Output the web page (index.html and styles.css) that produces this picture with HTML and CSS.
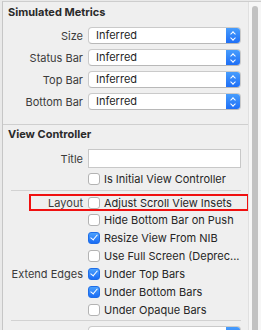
FILE: index.html
```html
<!DOCTYPE html>
<html lang="en">
<head>
    <meta charset="UTF-8">
    <meta name="viewport" content="width=device-width, initial-scale=1.0">
    <title>Attributes Inspector</title>
    <link rel="stylesheet" href="styles.css">
</head>
<body>
    <div class="panel">
        <div class="content">
            <div class="section metrics">
                <h2>Simulated Metrics</h2>
                <div class="fields">
                    <div class="row">
                        <label>Size</label>
                        <div class="select"><span>Inferred</span><i class="arrows"></i></div>
                    </div>
                    <div class="row">
                        <label>Status Bar</label>
                        <div class="select"><span>Inferred</span><i class="arrows"></i></div>
                    </div>
                    <div class="row">
                        <label>Top Bar</label>
                        <div class="select"><span>Inferred</span><i class="arrows"></i></div>
                    </div>
                    <div class="row">
                        <label>Bottom Bar</label>
                        <div class="select"><span>Inferred</span><i class="arrows"></i></div>
                    </div>
                </div>
            </div>

            <div class="section controller">
                <h2>View Controller</h2>
                <div class="row title-row">
                    <label>Title</label>
                    <div class="textfield"></div>
                </div>
                <div class="row check-row">
                    <label></label>
                    <div class="check"><span class="box"></span>Is Initial View Controller</div>
                </div>
                <hr class="divider">
                <div class="highlight">
                    <div class="row check-row">
                        <label>Layout</label>
                        <div class="check"><span class="box"></span>Adjust Scroll View Insets</div>
                    </div>
                </div>
                <div class="row check-row">
                    <label></label>
                    <div class="check"><span class="box"></span>Hide Bottom Bar on Push</div>
                </div>
                <div class="row check-row">
                    <label></label>
                    <div class="check"><span class="box on"></span>Resize View From NIB</div>
                </div>
                <div class="row check-row">
                    <label></label>
                    <div class="check"><span class="box"></span>Use Full Screen (Deprec...</div>
                </div>
                <div class="row check-row">
                    <label>Extend Edges</label>
                    <div class="check"><span class="box on"></span>Under Top Bars</div>
                </div>
                <div class="row check-row">
                    <label></label>
                    <div class="check"><span class="box on"></span>Under Bottom Bars</div>
                </div>
                <div class="row check-row">
                    <label></label>
                    <div class="check"><span class="box"></span>Under Opaque Bars</div>
                </div>
                <hr class="divider last">
                <div class="row">
                    <label></label>
                    <div class="select"><span></span><i class="arrows"></i></div>
                </div>
            </div>
        </div>
        <div class="scrollbar"><div class="thumb"></div></div>
    </div>
</body>
</html>
```

FILE: styles.css
```css
body {
    margin: 0;
    background-color: #e9e9e9;
    font-family: Inter, "Liberation Sans", Arial, sans-serif;
    font-size: 11px;
    color: #262626;
    height: 330px;
    overflow: hidden;
}
.panel {
    display: flex;
    margin: 1px 0 0 2px;
    height: 329px;
    border-top: 1px solid #cdcdcd;
    border-left: 1px solid #c6c6c6;
    background-color: #efefef;
    box-sizing: border-box;
}
.content {
    flex: 1;
    padding-right: 7px;
}
.section h2 {
    margin: 0;
    padding-left: 5px;
    font-size: 11px;
    font-weight: 700;
    color: #2a2a2a;
}
.metrics {
    padding-bottom: 14px;
}
.metrics h2 {
    line-height: 20px;
}
.fields {
    display: flex;
    flex-direction: column;
    gap: 5px;
    margin-top: 5px;
}
.controller {
    border-top: 1px solid #cfcfcf;
    margin-right: -7px;
    padding-right: 7px;
}
.controller h2 {
    line-height: 18px;
}
.row {
    display: grid;
    grid-template-columns: 80px 1fr;
    column-gap: 5px;
    align-items: center;
}
.row label {
    text-align: right;
    color: #3b3b3b;
    white-space: nowrap;
}
.select {
    display: flex;
    height: 17px;
    background-color: #ffffff;
    border: 1px solid #cacaca;
    border-bottom-color: #b8b8b8;
    border-radius: 4px;
    box-sizing: border-box;
    overflow: hidden;
}
.select span {
    flex: 1;
    padding-left: 7px;
    line-height: 15px;
    color: #1f1f1f;
}
.arrows {
    width: 15px;
    margin: -1px -1px -1px 0;
    background: linear-gradient(#4aa0fd, #1c6cf6);
    border-radius: 0 4px 4px 0;
    position: relative;
}
.arrows::before,
.arrows::after {
    content: "";
    position: absolute;
    left: 5px;
    width: 3px;
    height: 3px;
    border-left: 1.3px solid #ffffff;
    border-top: 1.3px solid #ffffff;
}
.arrows::before {
    top: 5px;
    transform: rotate(45deg);
}
.arrows::after {
    top: 9px;
    transform: rotate(225deg);
}
.title-row {
    margin-top: 6px;
}
.textfield {
    height: 19px;
    background-color: #ffffff;
    border: 1px solid #c8c8c8;
    box-sizing: border-box;
}
.check-row {
    height: 18px;
}
.title-row + .check-row {
    margin-top: 2px;
}
.check {
    display: flex;
    align-items: center;
    gap: 4px;
    white-space: nowrap;
    color: #262626;
}
.box {
    width: 12px;
    height: 12px;
    background-color: #ffffff;
    border: 1px solid #b3b3b3;
    border-radius: 3px;
    box-sizing: border-box;
    position: relative;
}
.box.on {
    background: linear-gradient(#4aa0fd, #1a6cf5);
    border-color: #1f6ee8;
}
.box.on::after {
    content: "";
    position: absolute;
    left: 3px;
    top: 0px;
    width: 3px;
    height: 6px;
    border-right: 1.6px solid #ffffff;
    border-bottom: 1.6px solid #ffffff;
    transform: rotate(40deg);
}
.divider {
    margin: 2px 0 0 8px;
    border: 0;
    border-top: 1px solid #d2d2d2;
    height: 0;
}
.divider.last {
    margin-top: 1px;
    margin-bottom: 5px;
}
.highlight {
    margin: 3px 1px 0 26px;
    border: 2px solid #f01010;
    height: 17px;
    box-sizing: border-box;
    margin-right: -8px;
}
.highlight .row {
    grid-template-columns: 52px 1fr;
    height: 13px;
}
.scrollbar {
    width: 13px;
    border-left: 1px solid #e0e0e0;
    background-color: #f6f6f6;
    padding: 4px 3px 0 3px;
    box-sizing: border-box;
    margin-left: 0;
}
.thumb {
    height: 340px;
    background-color: #c2c2c2;
    border-radius: 4px;
}
```
